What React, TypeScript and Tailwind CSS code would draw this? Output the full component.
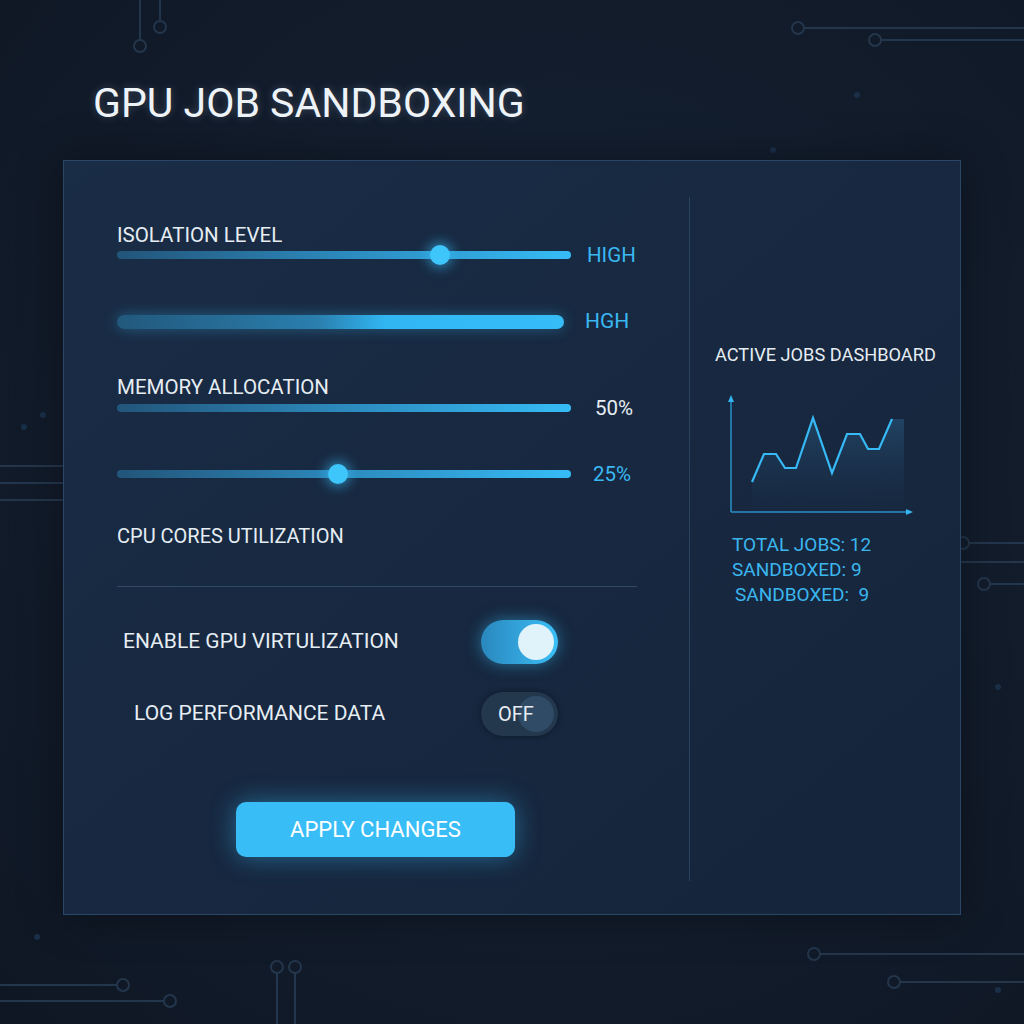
import React from "react";

const font = { fontFamily: "Roboto, 'Liberation Sans', sans-serif" };

function Circuits(): JSX.Element {
  const c = "#24364c";
  return (
    <svg className="absolute inset-0 pointer-events-none" width="1024" height="1024" viewBox="0 0 1024 1024" fill="none">
      <g stroke={c} strokeWidth="2">
        <line x1="140" y1="0" x2="140" y2="40" />
        <circle cx="140" cy="46" r="6" />
        <line x1="160" y1="0" x2="160" y2="21" />
        <circle cx="160" cy="27" r="6" />
        <circle cx="798" cy="28" r="6" />
        <line x1="804" y1="28" x2="1024" y2="28" />
        <circle cx="875" cy="40" r="6" />
        <line x1="881" y1="40" x2="1024" y2="40" />
        <line x1="0" y1="466" x2="76" y2="466" />
        <circle cx="82" cy="466" r="6" />
        <line x1="0" y1="483" x2="165" y2="483" />
        <line x1="0" y1="500" x2="100" y2="500" />
        <circle cx="106" cy="500" r="6" />
        <circle cx="963" cy="543" r="6" />
        <line x1="969" y1="543" x2="1024" y2="543" />
        <line x1="915" y1="562" x2="1024" y2="562" />
        <circle cx="984" cy="584" r="6" />
        <line x1="990" y1="584" x2="1024" y2="584" />
        <line x1="0" y1="985" x2="117" y2="985" />
        <circle cx="123" cy="985" r="6" />
        <line x1="0" y1="1001" x2="164" y2="1001" />
        <circle cx="170" cy="1001" r="6" />
        <circle cx="277" cy="967" r="6" />
        <line x1="277" y1="973" x2="277" y2="1024" />
        <circle cx="295" cy="967" r="6" />
        <line x1="295" y1="973" x2="295" y2="1024" />
        <circle cx="814" cy="954" r="6" />
        <line x1="820" y1="954" x2="1024" y2="954" />
        <circle cx="894" cy="982" r="6" />
        <line x1="900" y1="982" x2="1024" y2="982" />
      </g>
      <g fill="#1a2f48">
        <circle cx="857" cy="95" r="3" />
        <circle cx="773" cy="150" r="3" />
        <circle cx="43" cy="415" r="3" />
        <circle cx="24" cy="427" r="3" />
        <circle cx="37" cy="937" r="3" />
        <circle cx="998" cy="990" r="3" />
        <circle cx="998" cy="687" r="3" />
      </g>
    </svg>
  );
}

function Track({ width, thumb }: { width: number; thumb?: number }): JSX.Element {
  return (
    <div className="relative h-5 flex items-center" style={{ width }}>
      <div className="h-2 w-full rounded-full bg-gradient-to-r from-[#22557a] via-[#2c8abd] to-[#36bcf6]" />
      {thumb !== undefined && (
        <div
          className="absolute top-0 h-5 w-5 rounded-full bg-[#3ec5fa] shadow-[0_0_12px_3px_rgba(56,189,248,0.55)]"
          style={{ left: thumb - 10 }}
        />
      )}
    </div>
  );
}

function Chart(): JSX.Element {
  const pts = "27,90 39,62 51,62 60,76 71,76 88,26 107,81 122,42 135,42 143,57 154,57 167,27";
  return (
    <svg width="190" height="125" viewBox="0 0 190 125" fill="none">
      <defs>
        <linearGradient id="fillg" x1="0" y1="0" x2="0" y2="1">
          <stop offset="0" stopColor="#2b5a82" stopOpacity="0.55" />
          <stop offset="1" stopColor="#1b3350" stopOpacity="0.1" />
        </linearGradient>
      </defs>
      <polygon points={`${pts} 179,27 179,120 27,120`} fill="url(#fillg)" />
      <line x1="6" y1="8" x2="6" y2="120" stroke="#2a8fc8" strokeWidth="1.5" />
      <line x1="6" y1="120" x2="183" y2="120" stroke="#2a8fc8" strokeWidth="1.5" />
      <polygon points="6,3 3,10 9,10" fill="#35b6f2" />
      <polygon points="188,120 181,117 181,123" fill="#35b6f2" />
      <polyline points={pts} stroke="#36b9f5" strokeWidth="2.2" strokeLinejoin="miter" />
    </svg>
  );
}

export default function App(): JSX.Element {
  return (
    <div
      className="relative w-[1024px] h-[1024px] overflow-hidden bg-[radial-gradient(ellipse_at_55%_45%,#17253a_0%,#121c2b_55%,#0f1724_100%)]"
      style={font}
    >
      <Circuits />
      <div className="relative">
        <h1 className="pt-[79px] pl-[93px] text-[41px] leading-[48px] font-normal text-[#eef3f8] [text-shadow:0_0_8px_rgba(200,225,255,0.25)]">
          GPU JOB SANDBOXING
        </h1>

        <div className="mt-[33px] ml-[63px] w-[898px] h-[755px] flex border border-[#2c4765] bg-gradient-to-br from-[#1a2d46] via-[#172840] to-[#15253b] shadow-[0_0_40px_rgba(0,0,0,0.35)]">
          {/* left settings column */}
          <div className="w-[625px] pl-[53px] flex flex-col text-[#e6edf3]">
            <div className="mt-[63px] h-[22px] leading-[22px] text-[20.5px]">ISOLATION LEVEL</div>
            <div className="-mt-px h-5 flex items-center">
              <Track width={454} thumb={323} />
              <span className="ml-[16px] text-[20.5px] text-[#3ab8f2]">HIGH</span>
            </div>

            <div className="mt-[47px] h-5 flex items-center">
              <div className="w-[447px] h-[14px] rounded-full bg-[linear-gradient(to_right,#22587c_0%,#2a7fae_45%,#31b6f2_60%,#36bdf8_100%)] shadow-[0_0_14px_rgba(56,189,248,0.35)]" />
              <span className="ml-[21px] text-[21px] text-[#3ab8f2]">HGH</span>
            </div>

            <div className="mt-[44px] h-[22px] leading-[22px] text-[20.5px]">MEMORY ALLOCATION</div>
            <div className="h-5 flex items-center">
              <Track width={454} />
              <span className="ml-[24px] text-[20.5px] text-[#e6edf3]">50%</span>
            </div>

            <div className="mt-[46px] h-5 flex items-center">
              <Track width={454} thumb={221} />
              <span className="ml-[22px] text-[20.5px] text-[#3ab8f2]">25%</span>
            </div>

            <div className="mt-[41px] h-[22px] leading-[22px] text-[20px]">CPU CORES UTILIZATION</div>

            <div className="mt-[39px] w-[520px] h-px bg-[#2e4a66]" />

            <div className="mt-[33px] h-[44px] flex items-center">
              <span className="ml-[6px] w-[358px] text-[21px]">ENABLE GPU VIRTULIZATION</span>
              <div className="w-[77px] h-[44px] rounded-full bg-gradient-to-r from-[#2a88bd] to-[#3bbff7] flex items-center justify-end pr-[4px] shadow-[0_0_16px_rgba(56,189,248,0.5)]">
                <div className="w-9 h-9 rounded-full bg-[#e0f3fb]" />
              </div>
            </div>

            <div className="mt-[28px] h-[44px] flex items-center">
              <span className="ml-[17px] w-[347px] text-[21px]">LOG PERFORMANCE DATA</span>
              <div className="relative w-[77px] h-[44px] rounded-full bg-[#23374d] flex items-center justify-end pr-[4px] shadow-[0_0_6px_rgba(0,0,0,0.4)]">
                <div className="w-9 h-9 rounded-full bg-[#2f4b66]" />
                <span className="absolute left-[17px] top-[11px] text-[20px] leading-[22px] text-[#e8eef4]">OFF</span>
              </div>
            </div>

            <button className="mt-[66px] ml-[119px] w-[279px] h-[55px] rounded-[10px] bg-[#39bdf7] text-white text-[22px] shadow-[0_0_26px_rgba(56,189,248,0.45)]">
              APPLY CHANGES
            </button>
          </div>

          <div className="w-px mt-[36px] mb-[33px] bg-[#2a4460]" />

          {/* right dashboard column */}
          <div className="flex-1 pl-[25px] flex flex-col">
            <div className="mt-[184px] h-5 leading-5 text-[18.2px] text-[#e6edf3]">ACTIVE JOBS DASHBOARD</div>
            <div className="mt-[27px] ml-[10px]">
              <Chart />
            </div>
            <div className="mt-[15px] ml-[17px] flex flex-col text-[19px] leading-[25px] text-[#3bb6ee]">
              <span>TOTAL JOBS: 12</span>
              <span>SANDBOXED: 9</span>
              <span className="ml-[3px]">SANDBOXED:&nbsp; 9</span>
            </div>
          </div>
        </div>
      </div>
    </div>
  );
}
